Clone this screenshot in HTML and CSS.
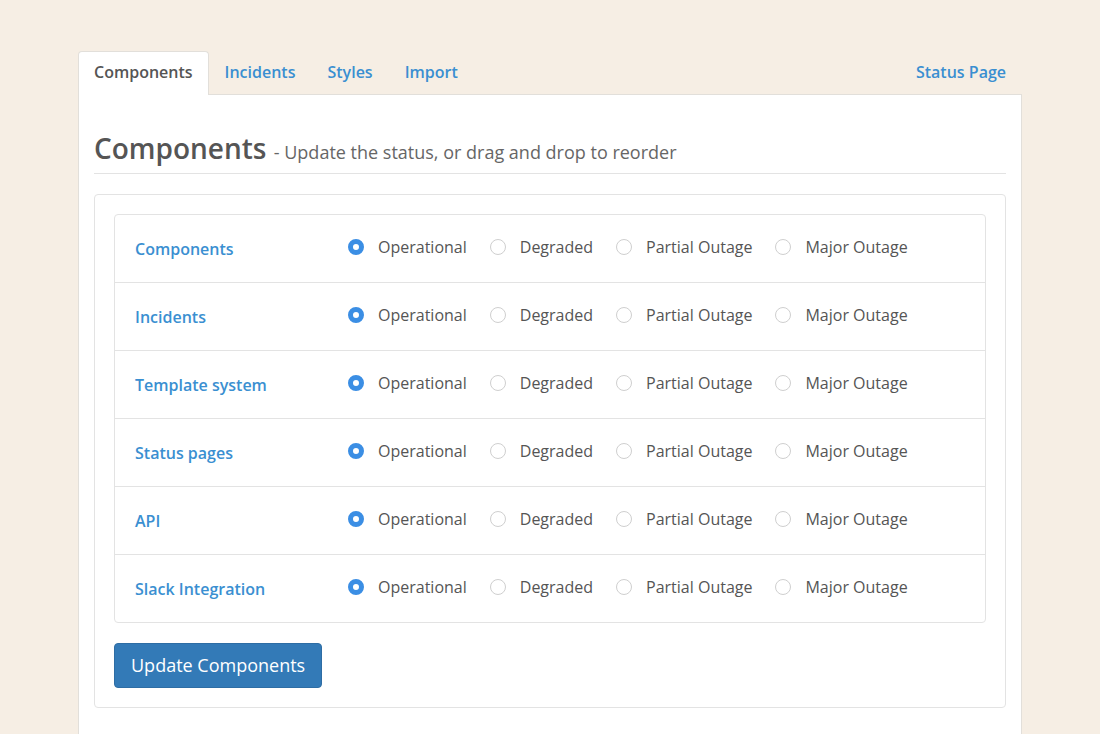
FILE: index.html
```html
<!DOCTYPE html>
<html>
<head>
<meta charset="utf-8">
<link rel="stylesheet" href="styles.css">
</head>
<body>
<div class="page">
  <nav class="tabs">
    <a class="tab active">Components</a>
    <a class="tab">Incidents</a>
    <a class="tab">Styles</a>
    <a class="tab">Import</a>
    <a class="tab right">Status Page</a>
  </nav>
  <main class="panel">
    <h1 class="title">Components <small>- Update the status, or drag and drop to reorder</small></h1>
    <section class="card">
      <ul class="list">
        <li class="row"><span class="name">Components</span>
          <div class="opts">
            <label class="opt"><span class="radio checked"></span>Operational</label>
            <label class="opt"><span class="radio"></span>Degraded</label>
            <label class="opt"><span class="radio"></span>Partial Outage</label>
            <label class="opt"><span class="radio"></span>Major Outage</label>
          </div>
        </li>
        <li class="row"><span class="name">Incidents</span>
          <div class="opts">
            <label class="opt"><span class="radio checked"></span>Operational</label>
            <label class="opt"><span class="radio"></span>Degraded</label>
            <label class="opt"><span class="radio"></span>Partial Outage</label>
            <label class="opt"><span class="radio"></span>Major Outage</label>
          </div>
        </li>
        <li class="row"><span class="name">Template system</span>
          <div class="opts">
            <label class="opt"><span class="radio checked"></span>Operational</label>
            <label class="opt"><span class="radio"></span>Degraded</label>
            <label class="opt"><span class="radio"></span>Partial Outage</label>
            <label class="opt"><span class="radio"></span>Major Outage</label>
          </div>
        </li>
        <li class="row"><span class="name">Status pages</span>
          <div class="opts">
            <label class="opt"><span class="radio checked"></span>Operational</label>
            <label class="opt"><span class="radio"></span>Degraded</label>
            <label class="opt"><span class="radio"></span>Partial Outage</label>
            <label class="opt"><span class="radio"></span>Major Outage</label>
          </div>
        </li>
        <li class="row"><span class="name">API</span>
          <div class="opts">
            <label class="opt"><span class="radio checked"></span>Operational</label>
            <label class="opt"><span class="radio"></span>Degraded</label>
            <label class="opt"><span class="radio"></span>Partial Outage</label>
            <label class="opt"><span class="radio"></span>Major Outage</label>
          </div>
        </li>
        <li class="row"><span class="name">Slack Integration</span>
          <div class="opts">
            <label class="opt"><span class="radio checked"></span>Operational</label>
            <label class="opt"><span class="radio"></span>Degraded</label>
            <label class="opt"><span class="radio"></span>Partial Outage</label>
            <label class="opt"><span class="radio"></span>Major Outage</label>
          </div>
        </li>
      </ul>
      <button class="btn">Update Components</button>
    </section>
  </main>
</div>
</body>
</html>
```

FILE: styles.css
```css
html, body {
  margin: 0;
  padding: 0;
  background: #f6eee4;
  font-family: "Open Sans", "Liberation Sans", sans-serif;
  color: #555;
  overflow: hidden;
}
.page {
  width: 944px;
  margin: 0 auto;
  padding-top: 51px;
}
.tabs {
  display: flex;
  align-items: stretch;
  height: 43px;
  position: relative;
  z-index: 1;
}
.tab {
  display: flex;
  align-items: center;
  padding: 0 15px 3px;
  font-size: 16px;
  font-weight: 600;
  color: #3a8fd1;
  border: 1px solid transparent;
  border-bottom: none;
  border-radius: 4px 4px 0 0;
  box-sizing: border-box;
}
.tab.active {
  background: #fff;
  color: #555;
  border-color: #e2dfda;
  height: 44px;
}
.tab.right {
  margin-left: auto;
}
.panel {
  background: #fff;
  border: 1px solid #e2dfda;
  padding: 35px 15px 60px;
}
.title {
  margin: 0;
  font-size: 28px;
  font-weight: 600;
  line-height: 36px;
  height: 36px;
  color: #555;
  padding-bottom: 7px;
  border-bottom: 1px solid #e3e3e3;
  white-space: nowrap;
}
.title small {
  font-size: 18px;
  font-weight: 400;
  line-height: 0;
  color: #666;
}
.card {
  margin-top: 20px;
  border: 1px solid #e3e3e3;
  border-radius: 4px;
  padding: 19px;
}
.list {
  list-style: none;
  margin: 0;
  padding: 0;
  border: 1px solid #e3e3e3;
  border-radius: 4px;
}
.row {
  display: flex;
  align-items: center;
  height: 67px;
  padding-left: 20px;
  border-top: 1px solid #e3e3e3;
}
.row:first-child {
  border-top: none;
}
.name {
  width: 213px;
  flex: none;
  font-size: 16px;
  font-weight: 600;
  color: #3a8fd1;
  padding-top: 1px;
}
.opts {
  display: flex;
  align-items: center;
  margin-top: -4px;
}
.opt {
  display: flex;
  align-items: center;
  font-size: 16px;
  color: #555;
  margin-right: 23px;
}
.radio {
  width: 16px;
  height: 16px;
  box-sizing: border-box;
  border: 1px solid #cfcfcf;
  border-radius: 50%;
  background: #fff;
  margin-right: 14px;
  flex: none;
}
.radio.checked {
  border: 5px solid #3b8ee4;
  background: #fff;
}
.btn {
  display: block;
  margin-top: 20px;
  font-family: "Open Sans", "Liberation Sans", sans-serif;
  font-size: 18px;
  color: #fff;
  background: #337ab7;
  border: 1px solid #2e6da4;
  border-radius: 4px;
  padding: 0 16px;
  height: 45px;
  line-height: 43px;
}
```
